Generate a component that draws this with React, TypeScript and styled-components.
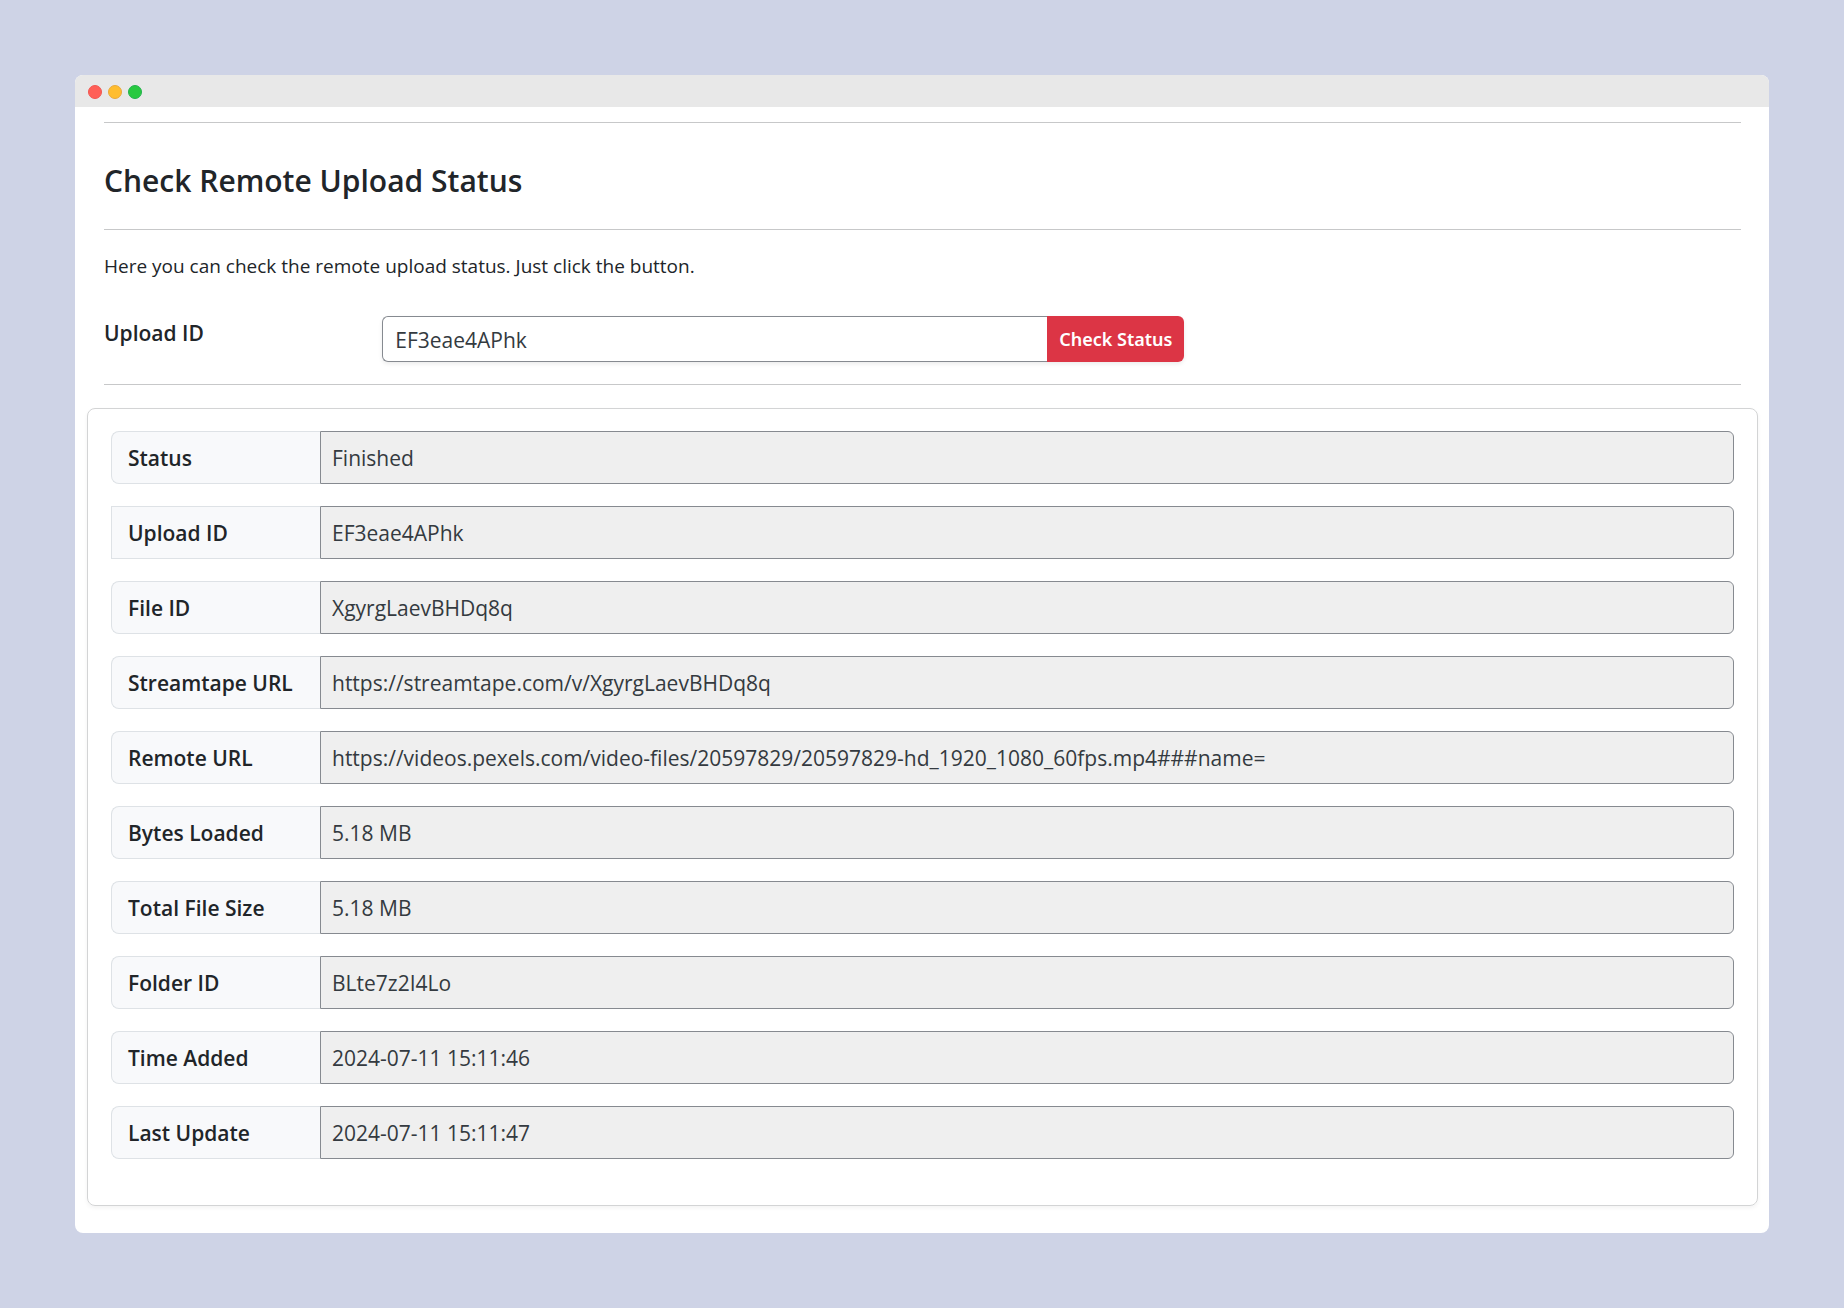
import React from "react";
import styled, { createGlobalStyle } from "styled-components";

const GlobalStyle = createGlobalStyle`
  *, *::before, *::after { box-sizing: border-box; }
  body {
    margin: 0;
    background: #ced3e6;
    color: #212529;
    font-family: "Segoe UI", "Open Sans", "Noto Sans", sans-serif;
    font-size: 19px;
    line-height: 28px;
  }
`;

const Page = styled.div`
  min-height: 100vh;
  padding: 75px;
`;

const Window = styled.section`
  overflow: hidden;
  border-radius: 8px;
  background: #fff;
`;

const TitleBar = styled.div`
  display: flex;
  align-items: center;
  gap: 6px;
  height: 32px;
  padding: 2px 13px 0;
  background: #e8e8e8;
`;

const Dot = styled.span<{ $fill: string; $edge: string }>`
  width: 14px;
  height: 14px;
  border: 1px solid ${(p) => p.$edge};
  border-radius: 50%;
  background: ${(p) => p.$fill};
`;

const Content = styled.main`
  padding: 15px 11px 27px 12px;
`;

const Intro = styled.div`
  padding: 0 17px;
`;

const Rule = styled.hr`
  height: 1px;
  margin: 0;
  border: 0;
  background: #c7c8c9;
`;

const Title = styled.h1`
  margin: 0;
  padding: 37px 0 27px;
  font-size: 30px;
  font-weight: 600;
  line-height: 42px;
`;

const Lead = styled.p`
  margin: 0;
  padding: 22px 0 36px;
`;

const CheckForm = styled.form`
  display: grid;
  grid-template-columns: 17% 49%;
  align-items: start;
  padding-bottom: 22px;
`;

const FormLabel = styled.label`
  padding: 3px 0;
  font-size: 21px;
  font-weight: 600;
`;

const InputGroup = styled.div`
  display: flex;
  height: 46px;
  border-radius: 6px;
  box-shadow: 0 2px 4px rgba(0, 0, 0, 0.08);
`;

const Field = styled.input`
  flex: 1;
  min-width: 0;
  padding: 1px 11px 0;
  border: 1px solid #868a90;
  border-radius: 0 6px 6px 0;
  background: #efefef;
  color: #343a40;
  font: inherit;
  font-size: 21px;
`;

const IdField = styled(Field)`
  padding: 1px 12px 0;
  border-right: 0;
  border-radius: 6px 0 0 6px;
  background: #fff;
`;

const CheckButton = styled.button`
  padding: 0 12px;
  border: 0;
  border-radius: 0 6px 6px 0;
  background: #dc3545;
  color: #fff;
  font: inherit;
  font-family: "Segoe UI", "Noto Sans", "Open Sans", sans-serif;
  font-size: 18px;
  font-weight: 600;
  white-space: nowrap;
`;

const Card = styled.section`
  display: grid;
  gap: 22px;
  margin-top: 23px;
  padding: 22px 23px 46px;
  border: 1px solid #d3d4d5;
  border-radius: 8px;
  box-shadow: 0 2px 4px rgba(0, 0, 0, 0.05);
`;

const Row = styled.div`
  display: flex;
  height: 53px;
`;

const RowLabel = styled.label<{ $square?: boolean }>`
  display: flex;
  align-items: center;
  width: 209px;
  padding: 0 16px;
  border: 1px solid #dee2e6;
  border-right: 0;
  border-radius: ${(p) => (p.$square ? "0" : "8px 0 0 8px")};
  background: #f8f9fb;
  font-size: 21px;
  font-weight: 600;
  white-space: nowrap;
`;

const details = [
  { id: "status", label: "Status", value: "Finished" },
  { id: "upload", label: "Upload ID", value: "EF3eae4APhk", square: true },
  { id: "file", label: "File ID", value: "XgyrgLaevBHDq8q" },
  { id: "url", label: "Streamtape URL", value: "https://streamtape.com/v/XgyrgLaevBHDq8q" },
  {
    id: "remote",
    label: "Remote URL",
    value: "https://videos.pexels.com/video-files/20597829/20597829-hd_1920_1080_60fps.mp4###name=",
  },
  { id: "loaded", label: "Bytes Loaded", value: "5.18 MB" },
  { id: "total", label: "Total File Size", value: "5.18 MB" },
  { id: "folder", label: "Folder ID", value: "BLte7z2I4Lo" },
  { id: "added", label: "Time Added", value: "2024-07-11 15:11:46" },
  { id: "updated", label: "Last Update", value: "2024-07-11 15:11:47" },
];

export default function App() {
  return (
    <>
      <GlobalStyle />
      <Page>
        <Window>
          <TitleBar>
            <Dot $fill="#ff5f57" $edge="#f25650" />
            <Dot $fill="#ffbd2e" $edge="#e9a93a" />
            <Dot $fill="#28c940" $edge="#22b24c" />
          </TitleBar>
          <Content>
            <Intro>
              <Rule />
              <Title>Check Remote Upload Status</Title>
              <Rule />
              <Lead>Here you can check the remote upload status. Just click the button.</Lead>
              <CheckForm onSubmit={(e) => e.preventDefault()}>
                <FormLabel htmlFor="upload-id">Upload ID</FormLabel>
                <InputGroup>
                  <IdField id="upload-id" type="text" defaultValue="EF3eae4APhk" />
                  <CheckButton type="submit">Check Status</CheckButton>
                </InputGroup>
              </CheckForm>
              <Rule />
            </Intro>
            <Card>
              {details.map((d) => (
                <Row key={d.id}>
                  <RowLabel htmlFor={`detail-${d.id}`} $square={d.square}>
                    {d.label}
                  </RowLabel>
                  <Field id={`detail-${d.id}`} type="text" readOnly value={d.value} />
                </Row>
              ))}
            </Card>
          </Content>
        </Window>
      </Page>
    </>
  );
}
